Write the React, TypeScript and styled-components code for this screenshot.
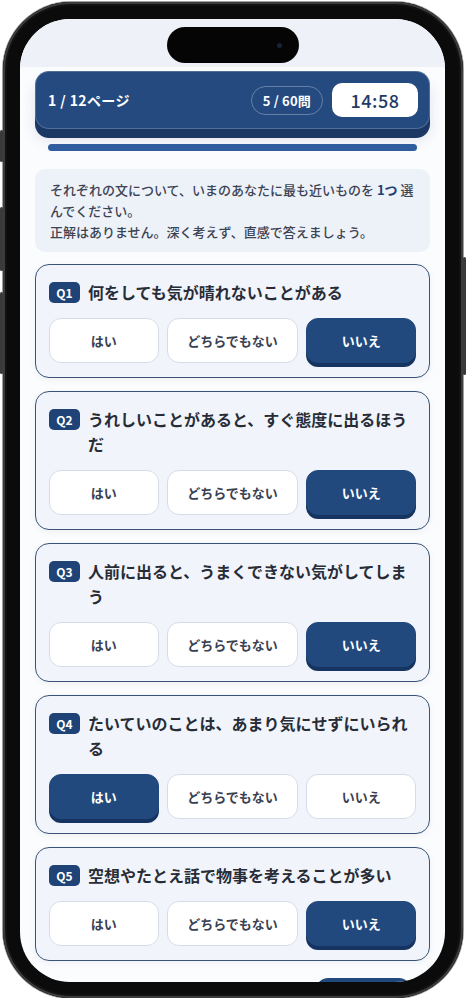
import React from "react";
import styled, { createGlobalStyle } from "styled-components";

type Choice = "yes" | "neutral" | "no";

interface Question {
    id: number;
    text: string;
    answer: Choice;
}

const questions: Question[] = [
    { id: 1, text: "何をしても気が晴れないことがある", answer: "no" },
    { id: 2, text: "うれしいことがあると、すぐ態度に出るほうだ", answer: "no" },
    { id: 3, text: "人前に出ると、うまくできない気がしてしまう", answer: "no" },
    { id: 4, text: "たいていのことは、あまり気にせずにいられる", answer: "yes" },
    { id: 5, text: "空想やたとえ話で物事を考えることが多い", answer: "no" },
];

const choices: { key: Choice; label: string }[] = [
    { key: "yes", label: "はい" },
    { key: "neutral", label: "どちらでもない" },
    { key: "no", label: "いいえ" },
];

export default function App() {
    return (
        <>
            <GlobalStyle />
            <Phone>
                <SideKey side="left" top={128} length={32} />
                <SideKey side="left" top={205} length={64} />
                <SideKey side="left" top={290} length={82} />
                <SideKey side="right" top={255} length={118} />
                <Screen>
                    <StatusArea>
                        <Island>
                            <Lens />
                        </Island>
                    </StatusArea>
                    <Content>
                        <Header>
                            <PageLabel>1 / 12ページ</PageLabel>
                            <CountPill>5 / 60問</CountPill>
                            <Timer>14:58</Timer>
                        </Header>
                        <Progress />
                        <Notice>
                            それぞれの文について、いまのあなたに最も近いものを <strong>1つ</strong> 選んでください。
                            <br />
                            正解はありません。深く考えず、直感で答えましょう。
                        </Notice>
                        <List>
                            {questions.map(q => (
                                <Card key={q.id}>
                                    <QuestionRow>
                                        <Badge>Q{q.id}</Badge>
                                        <QuestionText>{q.text}</QuestionText>
                                    </QuestionRow>
                                    <Choices>
                                        {choices.map(c => (
                                            <ChoiceButton key={c.key} selected={q.answer === c.key}>
                                                {c.label}
                                            </ChoiceButton>
                                        ))}
                                    </Choices>
                                </Card>
                            ))}
                        </List>
                        <Nav>
                            <NextButton>次へ</NextButton>
                        </Nav>
                    </Content>
                </Screen>
            </Phone>
        </>
    );
}

const GlobalStyle = createGlobalStyle`
html, body {
    margin: 0;
    padding: 0;
    background: #ffffff;
}
body {
    font-family: "Noto Sans CJK JP", "Noto Sans", sans-serif;
}
`;

const Phone = styled.div`
position: relative;
box-sizing: border-box;
width: 460px;
height: 996px;
margin: 2px 0 0 3px;
padding: 17px 18px 16px 17px;
display: flex;
border-radius: 68px;
background: #0b0b0b;
box-shadow: inset 0 0 0 2px #3c3c3c, inset 0 0 0 4px #121212, 0 0 0 1px #a0a0a0;
`;

const SideKey = styled.div<{ side: "left" | "right"; top: number; length: number }>`
position: absolute;
top: ${p => p.top}px;
${p => (p.side === "left" ? "left: -3px;" : "right: -3px;")}
width: 3px;
height: ${p => p.length}px;
border-radius: 2px;
background: #3a3a3a;
`;

const Screen = styled.div`
flex: 1;
display: flex;
flex-direction: column;
overflow: hidden;
border-radius: 50px;
background: #fbfcfe;
`;

const StatusArea = styled.div`
flex: none;
height: 48px;
box-sizing: border-box;
padding-top: 8px;
display: flex;
justify-content: center;
background: #eef1f7;
`;

const Island = styled.div`
position: relative;
width: 132px;
height: 36px;
border-radius: 18px;
background: #050505;
`;

const Lens = styled.div`
position: absolute;
top: 16px;
right: 17px;
width: 5px;
height: 5px;
border-radius: 50%;
background: #16233a;
`;

const Content = styled.div`
display: flex;
flex-direction: column;
padding: 4px 15px 0 15px;
`;

const Header = styled.header`
display: flex;
align-items: center;
gap: 9px;
padding: 11px 11px 11px 12px;
border: 1px solid rgba(255, 255, 255, 0.2);
border-radius: 14px;
background: #244a7f;
box-shadow: 0 9px 0 #1b3864, 0 11px 14px rgba(20, 40, 80, 0.12);
color: #ffffff;
`;

const PageLabel = styled.div`
flex: 1;
font-size: 14px;
font-weight: 700;
letter-spacing: 0.4px;
`;

const CountPill = styled.div`
box-sizing: border-box;
height: 29px;
padding: 0 11px;
display: flex;
align-items: center;
border: 1px solid rgba(255, 255, 255, 0.3);
border-radius: 15px;
font-size: 13px;
font-weight: 700;
letter-spacing: 0.2px;
`;

const Timer = styled.div`
width: 86px;
height: 34px;
display: flex;
align-items: center;
justify-content: center;
border-radius: 10px;
background: #ffffff;
color: #1f3b68;
font-size: 18px;
font-weight: 500;
letter-spacing: 0.5px;
`;

const Progress = styled.div`
height: 7px;
margin: 15px 13px 0 13px;
border-radius: 4px;
background: #2f5d9e;
`;

const Notice = styled.p`
margin: 18px 0 0 0;
padding: 10px 12px 10px 15px;
border-radius: 10px;
background: #edf1f8;
color: #3c4353;
font-size: 13px;
font-weight: 500;
line-height: 21px;

& strong {
color: #1f3f70;
font-weight: 700;
}
`;

const List = styled.div`
display: flex;
flex-direction: column;
gap: 13px;
margin-top: 12px;
`;

const Card = styled.section`
padding: 15px 13px 14px 13px;
border: 1px solid #3a5479;
border-radius: 14px;
background: #f1f4fa;
box-shadow: 0 2px 6px rgba(30, 50, 90, 0.06);
`;

const QuestionRow = styled.div`
display: flex;
align-items: flex-start;
gap: 8px;
`;

const Badge = styled.span`
flex: none;
margin-top: 2px;
width: 31px;
height: 21px;
display: flex;
align-items: center;
justify-content: center;
border-radius: 5px;
background: #1f4377;
color: #ffffff;
font-size: 12px;
font-weight: 700;
`;

const QuestionText = styled.div`
color: #272c37;
font-size: 16px;
font-weight: 700;
line-height: 25px;
`;

const Choices = styled.div`
display: grid;
grid-template-columns: 1fr 1.2fr 1fr;
gap: 8px;
margin-top: 13px;
`;

const ChoiceButton = styled.button<{ selected: boolean }>`
height: 45px;
padding: 0;
border-radius: 12px;
border: 1px solid ${p => (p.selected ? "#22497e" : "#d6dce7")};
background: ${p => (p.selected ? "#22497e" : "#ffffff")};
box-shadow: ${p => (p.selected ? "0 4px 0 #163461" : "none")};
color: ${p => (p.selected ? "#ffffff" : "#3a4152")};
font-family: inherit;
font-size: 13px;
font-weight: 700;
`;

const Nav = styled.div`
display: flex;
justify-content: flex-end;
margin-top: 17px;
padding-right: 19px;
`;

const NextButton = styled.div`
width: 95px;
height: 44px;
display: flex;
align-items: center;
justify-content: center;
border-radius: 12px;
background: #22497e;
color: #ffffff;
font-size: 14px;
font-weight: 700;
`;
